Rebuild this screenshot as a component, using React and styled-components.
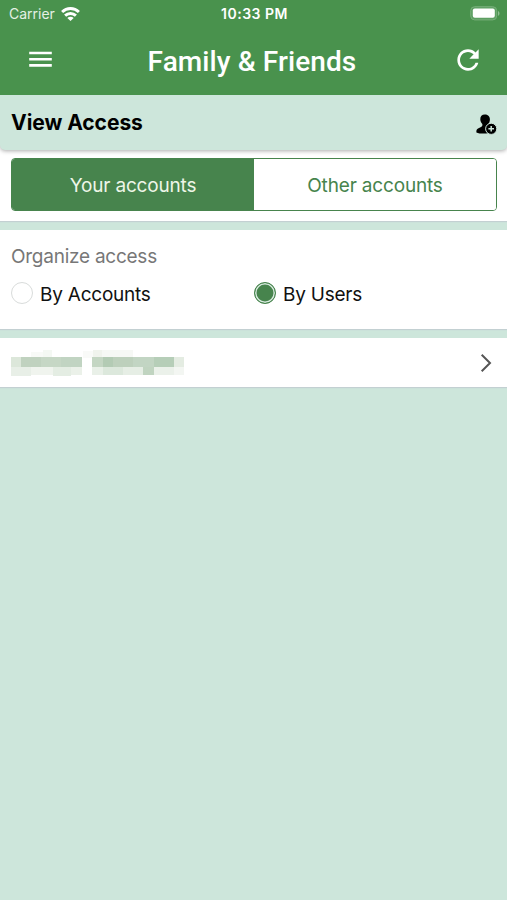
import { useState } from "react";

import styled, { createGlobalStyle } from "styled-components";

const redacted = [
  { x: 20, y: 2, w: 12, h: 6, color: "#f8faf7" },
  { x: 32, y: 0, w: 9, h: 8, color: "#f4f8f3" },
  { x: 72, y: 1, w: 10, h: 7, color: "#f9faf8" },
  { x: 82, y: 0, w: 9, h: 8, color: "#f0f3ed" },
  { x: 91, y: 0, w: 31, h: 8, color: "#f6f8f5" },
  { x: 0, y: 7, w: 10, h: 10, color: "#dce7da" },
  { x: 10, y: 7, w: 20, h: 10, color: "#c0d2bf" },
  { x: 30, y: 7, w: 20, h: 10, color: "#c6d7c5" },
  { x: 50, y: 7, w: 21, h: 10, color: "#c1d4c2" },
  { x: 81, y: 7, w: 11, h: 10, color: "#c4d6c3" },
  { x: 92, y: 7, w: 10, h: 10, color: "#b3cbb4" },
  { x: 102, y: 7, w: 20, h: 10, color: "#bdd0bc" },
  { x: 122, y: 7, w: 21, h: 10, color: "#c2d5c3" },
  { x: 143, y: 7, w: 20, h: 10, color: "#b6ceb8" },
  { x: 163, y: 7, w: 10, h: 10, color: "#e4ece2" },
  { x: 0, y: 17, w: 20, h: 9, color: "#e8efe7" },
  { x: 20, y: 17, w: 22, h: 8, color: "#f0f4ee" },
  { x: 42, y: 17, w: 18, h: 9, color: "#e4ede3" },
  { x: 60, y: 17, w: 11, h: 8, color: "#ebf1e9" },
  { x: 81, y: 17, w: 11, h: 8, color: "#e9f0e8" },
  { x: 92, y: 17, w: 20, h: 8, color: "#dce8dc" },
  { x: 112, y: 17, w: 20, h: 8, color: "#e6eee5" },
  { x: 132, y: 17, w: 11, h: 8, color: "#c0d4c0" },
  { x: 143, y: 17, w: 20, h: 8, color: "#ebf1ea" },
  { x: 163, y: 17, w: 10, h: 8, color: "#f3f6f2" },
];

const App = () => {
  const [owner, setOwner] = useState("your");
  const [groupBy, setGroupBy] = useState("users");

  return (
    <>
      <GlobalStyle />
      <Screen>
        <Header>
          <StatusBar>
            <Carrier>
              <span>Carrier</span>
              <svg width="19" height="14" viewBox="0 0 19 14">
                <g fill="none" stroke="#fff" strokeWidth="2.9">
                  <path d="M1.1 5C5.8.4 13.2.4 17.9 5" />
                  <path d="M4.1 8.6c3-2.9 7.8-2.9 10.8 0" />
                </g>
                <path d="M9.5 13.9L6.3 10.9c1.8-1.5 4.6-1.5 6.4 0z" fill="#fff" />
              </svg>
            </Carrier>
            <Time>10:33 PM</Time>
            <Battery>
              <svg width="30" height="15" viewBox="0 0 30 15">
                <rect x=".7" y=".7" width="26" height="13.2" rx="4" fill="#5d9f62" stroke="#78af7b" />
                <rect x="2.8" y="2.6" width="22" height="9.2" rx="2" fill="#fff" />
                <path d="M28 5c2 .8 2 4 0 4.8z" fill="#8fbd92" />
              </svg>
            </Battery>
          </StatusBar>
          <NavBar>
            <IconButton aria-label="Menu">
              <svg width="24" height="18" viewBox="0 0 24 18">
                <path d="M1.2 2h22.6M1.2 8.2h22.6M1.2 14.4h22.6" stroke="#fff" strokeWidth="2.6" />
              </svg>
            </IconButton>
            <Title>Family &amp; Friends</Title>
            <IconButton aria-label="Refresh">
              <svg width="32" height="32" viewBox="0 0 24 24">
                <path
                  fill="#fff"
                  d="M17.65 6.35C16.2 4.9 14.21 4 12 4c-4.42 0-7.99 3.58-7.99 8s3.57 8 7.99 8c3.73 0 6.84-2.55 7.73-6h-2.08c-.82 2.33-3.04 4-5.65 4-3.31 0-6-2.69-6-6s2.69-6 6-6c1.66 0 3.14.69 4.22 1.78L13 11h7V4l-2.35 2.35z"
                />
              </svg>
            </IconButton>
          </NavBar>
        </Header>

        <Switcher>
          <SectionHead>
            <h2>View Access</h2>
            <svg width="21" height="21" viewBox="0 0 21 21">
              <path d="M8.8.5C5.9.5 4.2 2.5 4.3 5.3c.1 2 .9 3.6 2 4.8.4 1.4-.1 2.3-1.3 2.9L2 14.4C.5 15.2.3 16.5.4 18.4c2.8 1.3 8.5 1.6 12.3.6l1.5-7c-1.5-.5-2-1-1.7-2 .9-1.2 1.4-2.8 1.4-4.7C13.9 2.4 11.7.5 8.8.5z" />
              <circle cx="15.2" cy="14.8" r="5.6" stroke="#cde6db" strokeWidth="1" />
              <path d="M15.2 12v5.6M12.4 14.8H18" stroke="#cde6db" strokeWidth="1.5" />
            </svg>
          </SectionHead>
          <Segments>
            <Segment $active={owner === "your"} onClick={() => setOwner("your")}>
              Your accounts
            </Segment>
            <Segment $active={owner === "other"} onClick={() => setOwner("other")}>
              Other accounts
            </Segment>
          </Segments>
        </Switcher>

        <Organize>
          <h3>Organize access</h3>
          <Options>
            <Option onClick={() => setGroupBy("accounts")}>
              <Radio $checked={groupBy === "accounts"} />
              <span>By Accounts</span>
            </Option>
            <Option onClick={() => setGroupBy("users")}>
              <Radio $checked={groupBy === "users"} />
              <span>By Users</span>
            </Option>
          </Options>
        </Organize>

        <UserRow>
          <svg width="174" height="26" viewBox="0 0 174 26">
            {redacted.map((r) => (
              <rect key={`${r.x}-${r.y}`} x={r.x} y={r.y} width={r.w} height={r.h} fill={r.color} />
            ))}
          </svg>
          <svg width="12" height="20" viewBox="0 0 12 20">
            <path d="M1.7 1.7L10 10l-8.3 8.3" fill="none" stroke="#555" strokeWidth="2" />
          </svg>
        </UserRow>
      </Screen>
    </>
  );
};

const GlobalStyle = createGlobalStyle`
  * {
    box-sizing: border-box;
  }

  body {
    margin: 0;
    background: #cde6db;
    font-family: Inter, "Liberation Sans", sans-serif;
  }

  svg {
    display: block;
    flex: none;
  }

  button {
    padding: 0;
    border: none;
    background: none;
    font-family: inherit;
  }
`;

const Screen = styled.main`
  display: flex;
  flex-direction: column;
  gap: 9px;
  min-height: 900px;
  background: #cde6db;
`;

const Header = styled.header`
  z-index: 1;
  height: 95px;
  margin-bottom: -9px;
  background: #49924d;
  color: #fff;
`;

const StatusBar = styled.div`
  display: grid;
  grid-template-columns: 1fr auto 1fr;
  align-items: center;
  height: 27px;
  padding: 0 7px 0 9px;
`;

const Carrier = styled.div`
  display: flex;
  align-items: center;
  gap: 6px;
  color: #e4f0e4;
  font-size: 14px;
`;

const Time = styled.span`
  font-size: 14px;
  font-weight: 600;
  letter-spacing: 0.5px;
`;

const Battery = styled.div`
  justify-self: end;
`;

const NavBar = styled.div`
  display: flex;
  align-items: center;
  justify-content: space-between;
  height: 66px;
  padding: 0 23px 0 28px;
`;

const IconButton = styled.button`
  display: flex;
`;

const Title = styled.h1`
  margin: 2px 0 0;
  font: 500 28px Roboto, sans-serif;
  letter-spacing: 0.1px;
`;

const Switcher = styled.section`
  height: 126px;
  background: #fff;
  box-shadow: 0 1px 1px #c3d0d2;
`;

const SectionHead = styled.div`
  display: flex;
  align-items: center;
  justify-content: space-between;
  height: 55px;
  padding: 0 10px 0 11px;
  border-radius: 0 0 5px 5px;
  background: #cde6db;
  box-shadow: 0 1px 4px #aaa;

  h2 {
    margin: 0 0 1px;
    font-size: 21px;
    font-weight: 700;
    letter-spacing: -0.05px;
  }

  svg {
    margin-top: 3px;
  }
`;

const Segments = styled.div`
  display: flex;
  height: 53px;
  margin: 8px 10px 0 11px;
  border: 1px solid #47844d;
  border-radius: 4px;
  overflow: hidden;
`;

const Segment = styled.button`
  flex: 1;
  padding-top: 2px;
  background: ${(p) => (p.$active ? "#47844d" : "#fff")};
  color: ${(p) => (p.$active ? "#eef6e8" : "#47844d")};
  font-size: 19px;
  letter-spacing: -0.17px;
`;

const Organize = styled.section`
  height: 99px;
  padding: 14px 11px 0;
  background: #fff;
  box-shadow: 0 1px 1px #c3d0d2;

  h3 {
    margin: 0;
    color: #777;
    font-size: 19px;
    font-weight: 400;
    line-height: 25px;
    letter-spacing: -0.25px;
  }
`;

const Options = styled.div`
  display: grid;
  grid-template-columns: 243px 1fr;
  margin-top: 12px;
`;

const Option = styled.button`
  display: flex;
  align-items: flex-start;
  gap: 7px;
  color: #111;
  font-size: 19px;
  line-height: 28px;
  letter-spacing: -0.23px;
`;

const Radio = styled.span`
  width: 22px;
  height: 22px;
  margin-top: 1px;
  border: 1px solid ${(p) => (p.$checked ? "#47844d" : "#d9dcdb")};
  border-radius: 50%;
  background: ${(p) => (p.$checked ? "#47844d" : "#fff")};
  box-shadow: inset 0 0 0 1.5px ${(p) => (p.$checked ? "#d9ebe0" : "#fff")};
`;

const UserRow = styled.section`
  display: flex;
  align-items: center;
  justify-content: space-between;
  height: 49px;
  padding: 0 15px 0 11px;
  background: #fff;
  box-shadow: 0 1px 1px #c3d0d2;
`;

export default App;
